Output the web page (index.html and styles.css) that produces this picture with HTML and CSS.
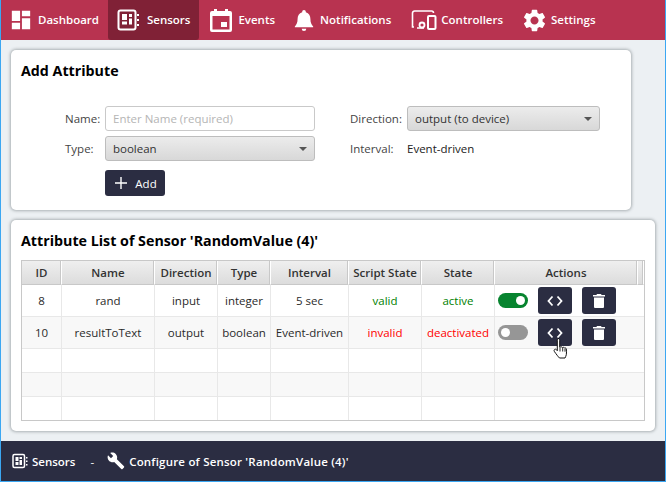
FILE: index.html
```html
<!DOCTYPE html>
<html lang="en">
<head>
<meta charset="utf-8">
<title>Configure Sensor</title>
<link rel="stylesheet" href="styles.css">
</head>
<body>
<div class="window">
  <nav class="nav">
    <a class="nav-item">
      <svg viewBox="0 0 24 24" width="22" height="22"><path fill="#fff" d="M2 2h9v11H2zM13 2h9v6h-9zM2 15h9v7H2zM13 10h9v12h-9z"/></svg>
      <span>Dashboard</span>
    </a>
    <a class="nav-item active">
      <svg viewBox="0 0 24 24" width="24" height="24"><rect x="2.500" y="2.500" width="17" height="19" rx="2" fill="none" stroke="#fff" stroke-width="2"/><path fill="#fff" d="M6 6h5v6H6zM13 6h3v3h-3zM13 10.500h3v6h-3zM6 13.500h5v3H6zM21 6h2v2h-2zM21 11h2v2h-2zM21 16h2v2h-2z"/></svg>
      <span>Sensors</span>
    </a>
    <a class="nav-item">
      <svg viewBox="0 0 24 24" width="24" height="24"><path fill="#fff" fill-rule="evenodd" d="M5 1h3v2h8V1h3v2h2a2 2 0 0 1 2 2v17a2 2 0 0 1-2 2H3a2 2 0 0 1-2-2V5a2 2 0 0 1 2-2h2zM3.500 8v13.500h17V8zM12 14h6v5h-6z"/></svg>
      <span>Events</span>
    </a>
    <a class="nav-item nav-notify">
      <svg viewBox="0 0 24 24" width="22" height="24"><path fill="#fff" d="M12 1a2 2 0 0 1 2 2v.600c3.400.9 5 3.700 5 7.400 0 4 1 6 3 8v1H2v-1c2-2 3-4 3-8 0-3.700 1.600-6.500 5-7.400V3a2 2 0 0 1 2-2zM9.500 21.500h5a2.500 2.500 0 0 1-5 0z"/></svg>
      <span>Notifications</span>
    </a>
    <a class="nav-item nav-ctrl">
      <svg viewBox="0 0 26 22" width="26" height="22"><path fill="none" stroke="#fff" stroke-width="1.600" d="M3 18H1.500V4a2 2 0 0 1 2-2h17a2 2 0 0 1 2 2M13 19H6"/><rect x="17" y="7" width="7.500" height="13" rx="1" fill="none" stroke="#fff" stroke-width="2"/><circle cx="11" cy="16" r="2.500" fill="none" stroke="#fff" stroke-width="1.800"/></svg>
      <span>Controllers</span>
    </a>
    <a class="nav-item nav-gear">
      <svg viewBox="0 0 24 24" width="27" height="27"><path fill="#fff" d="M19.140 12.940c.04-.3.06-.61.06-.94 0-.32-.02-.64-.07-.94l2.030-1.580c.18-.14.23-.41.12-.61l-1.920-3.320c-.12-.22-.37-.29-.59-.22l-2.390.96c-.5-.38-1.030-.7-1.620-.94l-.36-2.540c-.04-.24-.24-.41-.48-.41h-3.840c-.24 0-.43.17-.47.41l-.36 2.540c-.59.24-1.130.57-1.620.94l-2.390-.96c-.22-.08-.47 0-.59.22L2.740 8.870c-.12.21-.08.47.12.61l2.030 1.580c-.05.3-.09.63-.09.94s.02.64.07.94l-2.030 1.580c-.18.14-.23.41-.12.61l1.920 3.320c.12.22.37.29.59.22l2.390-.96c.5.38 1.030.7 1.620.94l.36 2.540c.05.24.24.41.48.41h3.840c.24 0 .44-.17.47-.41l.36-2.540c.59-.24 1.130-.56 1.620-.94l2.390.96c.22.08.47 0 .59-.22l1.920-3.320c.12-.22.07-.47-.12-.61l-2.010-1.580zM12 15.600c-1.980 0-3.600-1.620-3.600-3.600s1.620-3.600 3.600-3.600 3.600 1.620 3.600 3.600-1.620 3.600-3.600 3.600z"/></svg>
      <span>Settings</span>
    </a>
  </nav>

  <main class="content">
    <section class="card card-form">
      <h2 class="card-title">Add Attribute</h2>
      <div class="form">
        <div class="form-col">
          <div class="form-row">
            <label class="label label-left">Name:</label>
            <input class="input" type="text" placeholder="Enter Name (required)">
          </div>
          <div class="form-row">
            <label class="label label-left">Type:</label>
            <div class="select select-left"><span>boolean</span><i class="caret"></i></div>
          </div>
          <div class="form-row form-action">
            <span class="label label-left"></span>
            <button class="btn-add" type="button">
              <svg viewBox="0 0 12 12" width="12" height="12"><path fill="#fff" d="M5.300 0h1.400v5.300H12v1.400H6.700V12H5.300V6.700H0V5.300h5.300z"/></svg>
              <span>Add</span>
            </button>
          </div>
        </div>
        <div class="form-col">
          <div class="form-row">
            <label class="label label-right">Direction:</label>
            <div class="select select-right"><span>output (to device)</span><i class="caret"></i></div>
          </div>
          <div class="form-row">
            <span class="label label-right">Interval:</span>
            <span class="value">Event-driven</span>
          </div>
        </div>
      </div>
    </section>

    <section class="card card-list">
      <h2 class="card-title">Attribute List of Sensor 'RandomValue (4)'</h2>
      <div class="table-wrap">
        <table class="table">
          <colgroup>
            <col class="c-id"><col class="c-name"><col class="c-dir"><col class="c-type"><col class="c-int"><col class="c-script"><col class="c-state"><col class="c-act"><col class="c-fill">
          </colgroup>
          <thead>
            <tr><th>ID</th><th>Name</th><th>Direction</th><th>Type</th><th>Interval</th><th>Script State</th><th>State</th><th>Actions</th><th></th></tr>
          </thead>
          <tbody>
            <tr class="row-full">
              <td>8</td><td>rand</td><td>input</td><td>integer</td><td>5 sec</td><td class="ok">valid</td><td class="ok">active</td>
              <td class="actions" colspan="2">
                <div class="actions-inner">
                  <span class="toggle on"><i></i></span>
                  <button class="icon-btn" type="button"><svg viewBox="0 0 16 12" width="16" height="12"><path fill="none" stroke="#fff" stroke-width="1.800" d="M5.500 1.500 1.500 6l4 4.500M10.500 1.500l4 4.500-4 4.500"/></svg></button>
                  <button class="icon-btn" type="button"><svg viewBox="0 0 12 14" width="12" height="14"><path fill="#fff" d="M4 0h4l.6 1H12v1.600H0V1h3.400zM1 3.600h10V13a1 1 0 0 1-1 1H2a1 1 0 0 1-1-1z"/></svg></button>
                </div>
              </td>
            </tr>
            <tr class="row-full alt">
              <td>10</td><td>resultToText</td><td>output</td><td>boolean</td><td>Event-driven</td><td class="bad">invalid</td><td class="bad">deactivated</td>
              <td class="actions" colspan="2">
                <div class="actions-inner">
                  <span class="toggle"><i></i></span>
                  <button class="icon-btn" type="button"><svg viewBox="0 0 16 12" width="16" height="12"><path fill="none" stroke="#fff" stroke-width="1.800" d="M5.500 1.500 1.500 6l4 4.500M10.500 1.500l4 4.500-4 4.500"/></svg></button>
                  <button class="icon-btn" type="button"><svg viewBox="0 0 12 14" width="12" height="14"><path fill="#fff" d="M4 0h4l.6 1H12v1.600H0V1h3.400zM1 3.600h10V13a1 1 0 0 1-1 1H2a1 1 0 0 1-1-1z"/></svg></button>
                </div>
              </td>
            </tr>
            <tr class="row-empty"><td></td><td></td><td></td><td></td><td></td><td></td><td></td><td colspan="2"></td></tr>
            <tr class="row-empty alt"><td></td><td></td><td></td><td></td><td></td><td></td><td></td><td colspan="2"></td></tr>
            <tr class="row-empty"><td></td><td></td><td></td><td></td><td></td><td></td><td></td><td colspan="2"></td></tr>
          </tbody>
        </table>
      </div>
    </section>
  </main>

  <footer class="footer">
    <svg viewBox="0 0 16 16" width="16" height="16"><rect x="1" y="1.500" width="11.500" height="13" rx="1.500" fill="none" stroke="#fff" stroke-width="1.500"/><path fill="#fff" d="M3.500 4h3v4h-3zM7.500 4h2.500v2H7.500zM7.500 7h2.500v5H7.500zM3.500 9h3v3h-3zM14 4h1.500v1.500H14zM14 7.500h1.500V9H14zM14 11h1.500v1.500H14z"/></svg>
    <span class="crumb">Sensors</span>
    <span class="sep">-</span>
    <svg viewBox="0 0 18 18" width="18" height="18"><path fill="#fff" d="M17 14.300 9.900 7.200c.6-1.800.2-3.800-1.200-5.200C7.200.5 5 .2 3.200 1l3 3-2.200 2.200-3-3C.2 5 .6 7.200 2 8.700c1.400 1.400 3.400 1.800 5.200 1.200l7.100 7.100c.4.300.9.300 1.200 0l1.500-1.500c.3-.3.3-.9 0-1.200z"/></svg>
    <span class="crumb crumb-long">Configure of Sensor 'RandomValue (4)'</span>
  </footer>

  <svg class="cursor" viewBox="0 0 18 24" width="18" height="24"><path fill="#fff" stroke="#111" stroke-width="1" stroke-linejoin="round" d="M6 1.500c1 0 1.700.7 1.700 1.700v7l1-.3c.8-.2 1.500.1 1.800.6.800-.4 1.600-.2 2 .5.800-.3 1.600.1 1.800.9.300 1.700.3 4 0 5.800-.2 1.200-.8 2.200-1.300 3.300H7.500c-1.500-1.500-3-3.500-5-6.300-.7-1-.5-1.900.2-2.300.7-.4 1.500-.1 2 .5l.6.800V3.200c0-1 .7-1.700 1.700-1.700z"/><path fill="none" stroke="#111" stroke-width=".9" d="M8 10.500v4M10.700 11v3.500M13 11.700v3"/></svg>
</div>
</body>
</html>
```
FILE: styles.css
```css
* { box-sizing: border-box; }
html, body { margin: 0; padding: 0; height: 100%; }
body {
  font-family: "Open Sans", "Noto Sans", "Liberation Sans", sans-serif;
  font-size: 11.5px;
  color: #222;
  overflow: hidden;
}
.window {
  position: relative;
  width: 666px;
  height: 482px;
  display: flex;
  flex-direction: column;
  border-left: 1px solid #3ba7f2;
  border-right: 1px solid #3ba7f2;
  border-bottom: 1px solid #3ba7f2;
  background: #ecf0f3;
}

/* top navigation */
.nav {
  height: 40px;
  flex: none;
  display: flex;
  align-items: stretch;
  background: #b83350;
  padding-left: 9px;
}
.nav-item {
  display: flex;
  align-items: center;
  gap: 5px;
  padding-right: 18px;
  color: #fff;
  font-weight: 600;
  font-size: 11.5px;
  white-space: nowrap;
}
.nav-item span { padding-bottom: 1px; }
.nav-item:first-child { gap: 6px; padding-right: 9px; }
.nav-item.active {
  gap: 7px;
  background: #802136;
  border-radius: 0 0 3px 3px;
  padding: 0 9px 0 8px;
  margin-right: 10px;
}
.nav-notify { padding-right: 20px; }
.nav-ctrl { gap: 4px; padding-right: 19px; }
.nav-gear { gap: 3px; margin-left: -1px; }

/* cards */
.content {
  flex: 1;
  display: flex;
  flex-direction: column;
  gap: 10px;
  padding: 10px;
  min-height: 0;
}
.card {
  background: #fff;
  border-radius: 5px;
  box-shadow: 0 0 3px 1px rgba(90, 100, 105, .45);
  padding: 11px 10px 10px;
}
.card-form { width: 620px; height: 160px; }
.card-list { width: 644px; height: 211px; }
.card-title {
  margin: 0;
  font-size: 14.25px;
  line-height: 19px;
  font-weight: 700;
  color: #000;
}

/* form */
.form {
  display: flex;
  margin-top: 26px;
  padding-left: 44px;
}
.form-col { display: flex; flex-direction: column; gap: 5px; }
.form-col + .form-col { margin-left: 35px; }
.form-row { display: flex; align-items: center; height: 25px; }
.form-action { margin-top: 4px; height: 26px; }
.label { color: #444; display: block; }
.label-left { width: 40px; }
.label-right { width: 57px; }
.input {
  width: 210px;
  height: 25px;
  border: 1px solid #c9c9c9;
  border-radius: 3px;
  padding: 0 7px;
  font: inherit;
  background: #fff;
}
.input::placeholder { color: #b5b5b5; opacity: 1; }
.select {
  height: 25px;
  display: flex;
  align-items: center;
  justify-content: space-between;
  border: 1px solid #bdbdbd;
  border-radius: 3px;
  padding: 0 7px;
  color: #333;
  background: linear-gradient(#ececec, #d8d8d8);
}
.select-left { width: 210px; }
.select-right { width: 193px; }
.caret {
  width: 0;
  height: 0;
  border-left: 4px solid transparent;
  border-right: 4px solid transparent;
  border-top: 4px solid #555;
}
.value { color: #222; }
.btn-add {
  width: 60px;
  height: 26px;
  display: flex;
  align-items: center;
  justify-content: center;
  gap: 8px;
  border: 0;
  border-radius: 3px;
  background: #2b2d42;
  color: #fff;
  font: inherit;
  padding: 0 0 0 2px;
}

/* table */
.table-wrap {
  margin-top: 10px;
  width: 624px;
  height: 161px;
  border: 1px solid #c8c8c8;
  overflow: hidden;
}
.table {
  table-layout: fixed;
  border-collapse: separate;
  border-spacing: 0;
  width: 622px;
}
.c-id { width: 40px; }
.c-name { width: 93px; }
.c-dir { width: 63px; }
.c-type { width: 53px; }
.c-int { width: 78px; }
.c-script { width: 73px; }
.c-state { width: 73px; }
.c-act { width: 143px; }
.c-fill { width: 6px; }
th {
  height: 24px;
  padding: 0;
  font-weight: 600;
  font-size: 11.5px;
  color: #333;
  text-align: center;
  white-space: nowrap;
  background: linear-gradient(#efefef, #dcdcdc);
  border-right: 1px solid #fff;
  border-bottom: 1px solid #c8c8c8;
  box-shadow: inset -1px 0 0 #c8c8c8;
}
td {
  padding: 0;
  text-align: center;
  white-space: nowrap;
  color: #2a2a2a;
  border-right: 1px solid #e8e8e8;
  border-bottom: 1px solid #e8e8e8;
}
td:last-child { border-right: 0; }
.row-full td { height: 32px; }
.row-empty td { height: 24px; }
.row-empty:last-child td { border-bottom: 0; }
.alt td { background: #f8f8f8; }
td.ok { color: #008000; }
td.bad { color: #f00; }
.actions-inner {
  display: flex;
  align-items: center;
  padding-left: 3px;
}
.toggle {
  width: 30px;
  height: 15px;
  border-radius: 8px;
  background: #969696;
  display: flex;
  align-items: center;
  padding: 0 3px;
  margin-right: 10px;
}
.toggle i {
  width: 9px;
  height: 9px;
  border-radius: 50%;
  background: #fff;
}
.toggle.on { background: #07842f; justify-content: flex-end; }
.icon-btn {
  width: 34px;
  height: 27px;
  display: flex;
  align-items: center;
  justify-content: center;
  border: 0;
  border-radius: 3px;
  background: #2b2d42;
  padding: 0;
  margin-right: 10px;
}

/* footer */
.footer {
  flex: none;
  height: 40px;
  display: flex;
  align-items: center;
  background: #2b2d42;
  color: #fff;
  padding-left: 11px;
  gap: 4px;
  font-weight: 600;
}
.crumb-long { letter-spacing: .2px; }
.sep { margin: 0 9px 0 11px; font-weight: 400; }

/* pointer over the second code button */
.cursor {
  position: absolute;
  left: 551px;
  top: 337px;
}
```
